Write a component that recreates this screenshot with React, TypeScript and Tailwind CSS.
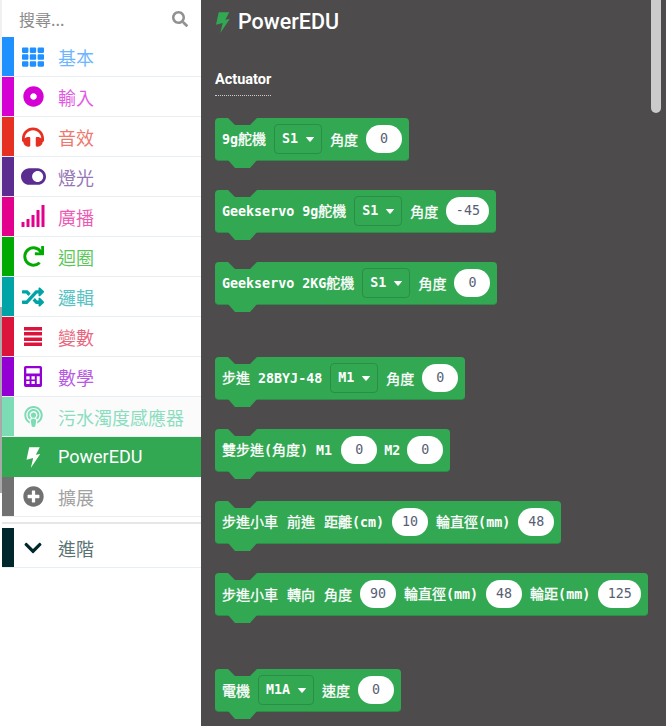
import { ReactNode } from "react";
import {
  FaChevronDown,
  FaDotCircle,
  FaHeadphones,
  FaPlusCircle,
  FaPodcast,
  FaRandom,
  FaRedo,
  FaSearch,
  FaTh,
  FaToggleOn,
} from "react-icons/fa";

const cjk = "font-['Noto_Sans_CJK_TC',sans-serif]";

function Bolt({ className }: { className?: string }) {
  return (
    <svg viewBox="0 0 14 21" className={className} fill="currentColor">
      <path d="M2.7 0.3 H13.3 L9.3 7.7 L13.7 7 L4.3 21 L6.7 11 L0 12.7z" />
    </svg>
  );
}

function Signal({ className }: { className?: string }) {
  return (
    <svg viewBox="0 0 24 22" className={className} fill="currentColor">
      <rect x="0" y="17" width="3" height="5" rx="0.5" />
      <rect x="5" y="14" width="3" height="8" rx="0.5" />
      <rect x="10" y="10" width="3" height="12" rx="0.5" />
      <rect x="15" y="5" width="3" height="17" rx="0.5" />
      <rect x="20" y="0" width="3" height="22" rx="0.5" />
    </svg>
  );
}

function Bars({ className }: { className?: string }) {
  return (
    <svg viewBox="0 0 18 19" className={className} fill="currentColor">
      <rect x="0" y="0" width="18" height="3.5" />
      <rect x="0" y="5" width="18" height="3.5" />
      <rect x="0" y="10.5" width="18" height="3.5" />
      <rect x="0" y="15.5" width="18" height="3.5" />
    </svg>
  );
}

function Calculator({ className }: { className?: string }) {
  return (
    <svg viewBox="0 0 55 64" className={className} fill="currentColor">
      <path
        fillRule="evenodd"
        d="M5 0 H50 Q55 0 55 5 V59 Q55 64 50 64 H5 Q0 64 0 59 V5 Q0 0 5 0z M7 7 V23 H48 V7z M7 31 V41 H17 V31z M23 31 V41 H33 V31z M39 31 V55 H48 V31z M7 46 V55 H17 V46z M23 46 V55 H33 V46z"
      />
    </svg>
  );
}

const rows = [
  { label: "基本", bar: "bg-[#1e90ff]", text: "text-[#1e90ff]", icon: <FaTh className="w-[22px] h-[22px]" /> },
  { label: "輸入", bar: "bg-[#d400d4]", text: "text-[#d400d4]", icon: <FaDotCircle className="w-[21px] h-[21px]" /> },
  { label: "音效", bar: "bg-[#e63022]", text: "text-[#e63022]", icon: <FaHeadphones className="w-[22px] h-[22px]" /> },
  { label: "燈光", bar: "bg-[#5c2d91]", text: "text-[#5c2d91]", icon: <FaToggleOn className="w-[25px] h-[25px]" /> },
  { label: "廣播", bar: "bg-[#e3008c]", text: "text-[#e3008c]", icon: <Signal className="w-[25px] h-[22px] -mt-[2px]" /> },
  { label: "迴圈", bar: "bg-[#00aa00]", text: "text-[#00aa00]", icon: <FaRedo className="w-[21px] h-[21px]" /> },
  { label: "邏輯", bar: "bg-[#00a4a6]", text: "text-[#00a4a6]", icon: <FaRandom className="w-[22px] h-[22px]" /> },
  { label: "變數", bar: "bg-[#dc143c]", text: "text-[#dc143c]", icon: <Bars className="w-[18px] h-[19px]" /> },
  { label: "數學", bar: "bg-[#9400d3]", text: "text-[#9400d3]", icon: <Calculator className="w-[18px] h-[21px]" /> },
];

function Row({ label, bar, text, icon, className = "" }: { label: string; bar: string; text: string; icon: ReactNode; className?: string }) {
  return (
    <div className={`flex h-10 border-b border-[#e9eef2] ${className}`}>
      <div className={`w-3 ${bar}`} />
      <div className={`w-8 ml-[3px] mr-[9px] flex items-center justify-center ${text}`}>{icon}</div>
      <span className={`self-center text-[18px] leading-none opacity-65 ${cjk} ${text}`}>{label}</span>
    </div>
  );
}

function Sidebar() {
  return (
    <aside className="w-[199px] bg-white shrink-0">
      <div className="h-[37px] flex items-center justify-between pl-[17px] pr-[13px]">
        <span className={`text-[16px] text-[#8a8a8a] ${cjk}`}>搜尋...</span>
        <FaSearch className="w-4 h-4 text-[#919191]" />
      </div>
      {rows.map((r) => (
        <Row key={r.label} {...r} />
      ))}
      <Row
        label="污水濁度感應器"
        bar="bg-[#7bdcb5]"
        text="text-[#4fd0a0]"
        className="bg-[#fbfbfb]"
        icon={<FaPodcast className="w-[21px] h-[21px] text-[#7bdcb5]" />}
      />
      <div className="flex h-[40px] bg-[#33a853] text-white">
        <div className="w-3" />
        <div className="w-8 ml-[3px] mr-[9px] flex items-center justify-center">
          <Bolt className="w-[15px] h-[21px]" />
        </div>
        <span className="self-center text-[18px] font-['Roboto',sans-serif] leading-none">PowerEDU</span>
      </div>
      <Row
        label="擴展"
        bar="bg-[#717171]"
        text="text-[#717171]"
        icon={<FaPlusCircle className="w-[21px] h-[21px]" />}
      />
      <div className="h-[2px] mt-[5px] mb-[4px] bg-[#e6e6e6]" />
      <Row
        label="進階"
        bar="bg-[#00272b]"
        text="text-[#00272b]"
        icon={<FaChevronDown className="w-[20px] h-[20px]" />}
      />
    </aside>
  );
}

function Mono({ children }: { children: ReactNode }) {
  return <span className="font-['DejaVu_Sans_Mono',monospace] text-[13.33px] font-bold [-webkit-text-stroke:0]">{children}</span>;
}

// space between two CJK words on a block
function Sp() {
  return <span className="inline-block w-[9px]" />;
}

function Field({ children }: { children: string }) {
  return (
    <span className="h-7 min-w-9 px-[9.5px] rounded-full bg-white flex items-center justify-center font-['DejaVu_Sans_Mono',monospace] font-normal text-[13.33px] text-[#575e75] [-webkit-text-stroke:0]">
      {children}
    </span>
  );
}

function Dropdown({ children }: { children: string }) {
  return (
    <span className="h-[30px] px-[7px] gap-2 flex items-center rounded-[4px] border border-[#2a8e46]">
      <Mono>{children}</Mono>
      <svg viewBox="0 0 8 5" className="w-2 h-[5px]" fill="white" stroke="white" strokeWidth="1" strokeLinejoin="round">
        <path d="M0.5 0.5 h7 l-3.5 4z" />
      </svg>
    </span>
  );
}

function Block({ children, gap = "mt-[29px]" }: { children: ReactNode; gap?: string }) {
  return (
    <div
      className={`relative w-fit h-[43px] flex items-center gap-2 px-[7px] rounded-[4px] bg-[#33a853] border-b border-[#2a8e46] text-white whitespace-pre text-[14px] font-normal [-webkit-text-stroke:0.3px_white] ${cjk} ${gap}`}
    >
      <svg viewBox="0 0 29 7" className="absolute top-0 left-[13px] w-[29px] h-[7px]" fill="#4d4b4c">
        <path d="M0 0 L7 7 H22 L29 0z" />
      </svg>
      {children}
      <svg viewBox="0 0 29 8" className="absolute top-full left-[13px] w-[29px] h-2" fill="#33a853">
        <path d="M0 0 L7 8 H22 L29 0z" />
      </svg>
    </div>
  );
}

function Flyout() {
  return (
    <main className="relative flex-1 bg-[#4d4b4c] pl-[14px] overflow-hidden">
      <div className="h-[44px] flex items-center gap-2 text-white">
        <Bolt className="w-[14px] h-[21px] ml-[1px] text-[#33a853]" />
        <span className="text-[21.5px] font-medium font-['Roboto',sans-serif] leading-none">PowerEDU</span>
      </div>
      <div className="mt-[26px] w-fit text-[14.5px] font-bold font-['Roboto',sans-serif] leading-5 text-white pb-[5px] border-b border-dotted border-[#cccccc]">
        Actuator
      </div>
      <Block gap="mt-[22px]">
        <span><Mono>9g</Mono>舵機</span>
        <Dropdown>S1</Dropdown>
        <span>角度</span>
        <Field>0</Field>
      </Block>
      <Block>
        <span><Mono>Geekservo 9g</Mono>舵機</span>
        <Dropdown>S1</Dropdown>
        <span>角度</span>
        <Field>-45</Field>
      </Block>
      <Block>
        <span><Mono>Geekservo 2KG</Mono>舵機</span>
        <Dropdown>S1</Dropdown>
        <span>角度</span>
        <Field>0</Field>
      </Block>
      <Block gap="mt-[52px]">
        <span>步進<Mono> 28BYJ-48</Mono></span>
        <Dropdown>M1</Dropdown>
        <span>角度</span>
        <Field>0</Field>
      </Block>
      <Block>
        <span className="mr-px">雙步進<Mono>(</Mono>角度<Mono>) M1</Mono></span>
        <Field>0</Field>
        <span className="-mx-px"><Mono>M2</Mono></span>
        <Field>0</Field>
      </Block>
      <Block>
        <span>步進小車<Sp />前進<Sp />距離<Mono>(cm)</Mono></span>
        <Field>10</Field>
        <span>輪直徑<Mono>(mm)</Mono></span>
        <Field>48</Field>
      </Block>
      <Block>
        <span>步進小車<Sp />轉向<Sp />角度</span>
        <Field>90</Field>
        <span>輪直徑<Mono>(mm)</Mono></span>
        <Field>48</Field>
        <span>輪距<Mono>(mm)</Mono></span>
        <Field>125</Field>
      </Block>
      <Block gap="mt-[53px]">
        <span>電機</span>
        <Dropdown>M1A</Dropdown>
        <span>速度</span>
        <Field>0</Field>
      </Block>
      <div className="absolute top-0 left-[450px] w-[10px] h-[113px] rounded-b-full bg-[#cbcbcb]" />
    </main>
  );
}

export default function App() {
  return (
    <div className="flex h-[726px] w-[666px] overflow-hidden bg-white">
      {/* thin strip left of the toolbox */}
      <div className="w-[2px] shrink-0 flex flex-col">
        <div className="h-[307px] bg-[#f0f0f0]" />
        <div className="h-[186px] bg-[#a9a9a9]" />
      </div>
      <Sidebar />
      <Flyout />
    </div>
  );
}
